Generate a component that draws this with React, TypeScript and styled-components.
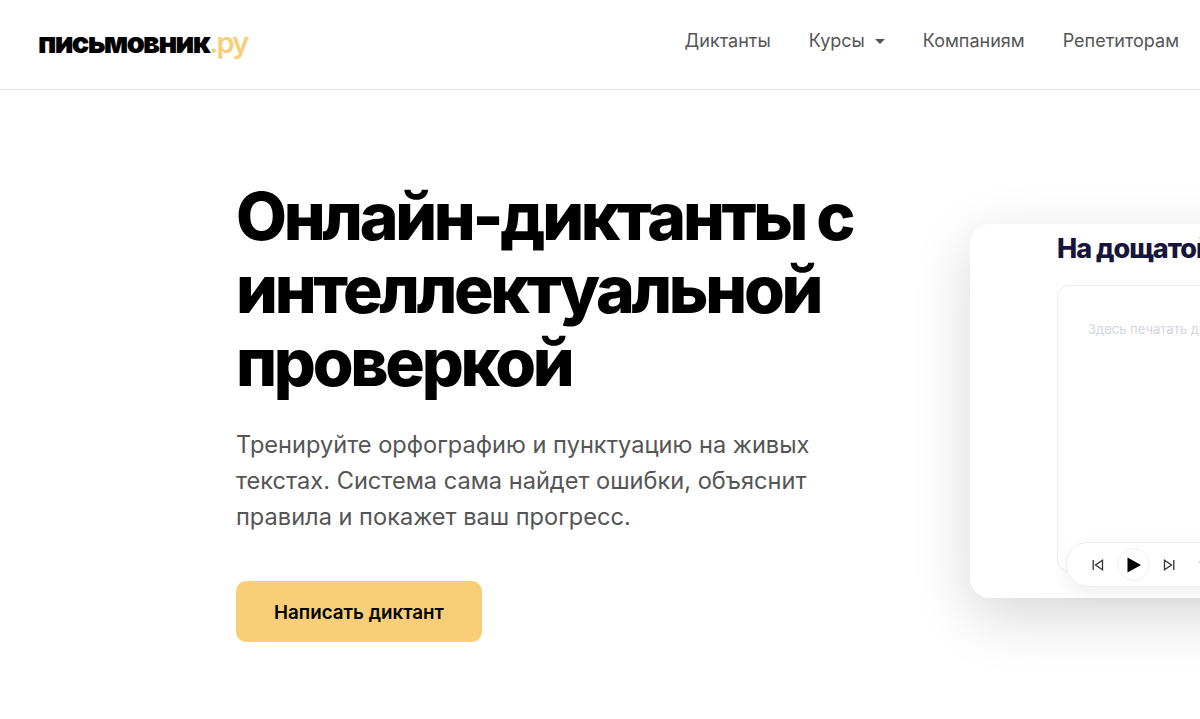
import React from "react";
import styled, { createGlobalStyle } from "styled-components";

const Global = createGlobalStyle`
  html, body { margin: 0; padding: 0; background: #fff; overflow: hidden; }
  body { font-family: Inter, "Liberation Sans", sans-serif; width: 1200px; height: 719px; }
`;

const Page = styled.div`
  width: 1200px;
  height: 719px;
  overflow: hidden;
`;

const Header = styled.header`
  height: 89px;
  border-bottom: 1px solid #e6e6e6;
  box-sizing: content-box;
  display: flex;
  align-items: center;
  justify-content: space-between;
  padding: 0 21px 0 38px;
`;

const Logo = styled.div`
  font-size: 29px;
  font-weight: 900;
  color: #000;
  letter-spacing: -1.7px;
  line-height: 30px;
  padding-bottom: 3px;
  span { color: #f8cf78; font-weight: 600; }
`;

const Nav = styled.nav`
  display: flex;
  align-items: center;
  gap: 38px;
  padding-bottom: 7px;
`;

const NavItem = styled.a`
  font-size: 18px;
  color: #555;
  line-height: 24px;
  display: flex;
  align-items: center;
`;

const Caret = styled.i`
  display: block;
  width: 0;
  height: 0;
  margin-left: 10px;
  border-left: 5px solid transparent;
  border-right: 5px solid transparent;
  border-top: 5px solid #555;
`;

const Hero = styled.main`
  display: grid;
  grid-template-columns: 734px 330px;
  padding: 90px 0 0 236px;
`;

const Copy = styled.div`
  display: flex;
  flex-direction: column;
  align-items: flex-start;
`;

const Title = styled.h1`
  margin: 0;
  font-size: 66px;
  line-height: 73px;
  font-weight: 800;
  letter-spacing: -3.3px;
  color: #000;
  white-space: nowrap;
`;

const Lead = styled.p`
  margin: 28px 0 0;
  font-size: 23.6px;
  line-height: 36px;
  color: #555;
  white-space: nowrap;
`;

const Cta = styled.button`
  margin-top: 46px;
  width: 246px;
  height: 61px;
  border: 0;
  border-radius: 10px;
  background: #f8cf78;
  color: #000;
  font-family: inherit;
  font-size: 18.8px;
  font-weight: 600;
  padding: 1px 0 0;
`;

const Card = styled.section`
  margin-top: 44px;
  width: 500px;
  height: 374px;
  border-radius: 20px;
  background: #fff;
  box-shadow: 0 18px 60px rgba(0, 0, 0, 0.16);
  padding: 0 0 0 87px;
  box-sizing: border-box;
  position: relative;
`;

const CardTitle = styled.h2`
  margin: 0;
  height: 61px;
  padding-top: 7px;
  box-sizing: border-box;
  font-size: 27px;
  line-height: 36px;
  font-weight: 800;
  letter-spacing: -1px;
  color: #17153b;
  white-space: nowrap;
`;

const Editor = styled.div`
  height: 287px;
  border: 1px solid #eeeeee;
  border-radius: 12px;
  padding: 35px 30px;
  box-sizing: border-box;
  font-size: 13px;
  line-height: 16px;
  color: #d3d5e0;
  white-space: nowrap;
`;

const Player = styled.div`
  position: absolute;
  left: 96px;
  top: 318px;
  width: 400px;
  height: 45px;
  border: 1px solid #eeeeee;
  border-radius: 23px;
  background: #fff;
  box-shadow: 0 6px 20px rgba(0, 0, 0, 0.07);
  box-sizing: border-box;
  display: flex;
  align-items: center;
  gap: 13px;
  padding-left: 25px;
`;

const PlayButton = styled.div`
  width: 33px;
  height: 33px;
  border-radius: 50%;
  border: 1px solid #eeeeee;
  box-sizing: border-box;
  display: flex;
  align-items: center;
  justify-content: center;
`;

const Speed = styled.span`
  font-size: 12px;
  color: #555;
  margin-left: 11px;
`;

export default function App() {
  return (
    <Page>
      <Global />
      <Header>
        <Logo>письмовник<span>.ру</span></Logo>
        <Nav>
          <NavItem>Диктанты</NavItem>
          <NavItem>Курсы<Caret /></NavItem>
          <NavItem>Компаниям</NavItem>
          <NavItem>Репетиторам</NavItem>
        </Nav>
      </Header>
      <Hero>
        <Copy>
          <Title>Онлайн-диктанты с<br />интеллектуальной<br />проверкой</Title>
          <Lead>Тренируйте орфографию и пунктуацию на живых<br />текстах. Система сама найдет ошибки, объяснит<br />правила и покажет ваш прогресс.</Lead>
          <Cta>Написать диктант</Cta>
        </Copy>
        <Card>
          <CardTitle>На дощатой</CardTitle>
          <Editor>Здесь печатать диктант</Editor>
          <Player>
            <svg width="12" height="12" viewBox="0 0 12 12" fill="none" stroke="#333" strokeWidth="1.3"><path d="M1.2 1v10" /><path d="M10.5 1.3v9.4L3.5 6z" /></svg>
            <PlayButton>
              <svg width="14" height="16" viewBox="0 0 14 16"><path d="M0.5 0.5v15L14 8z" fill="#000" /></svg>
            </PlayButton>
            <svg width="12" height="12" viewBox="0 0 12 12" fill="none" stroke="#333" strokeWidth="1.3"><path d="M10.8 1v10" /><path d="M1.5 1.3v9.4L8.5 6z" /></svg>
            <Speed>1x</Speed>
          </Player>
        </Card>
      </Hero>
    </Page>
  );
}
